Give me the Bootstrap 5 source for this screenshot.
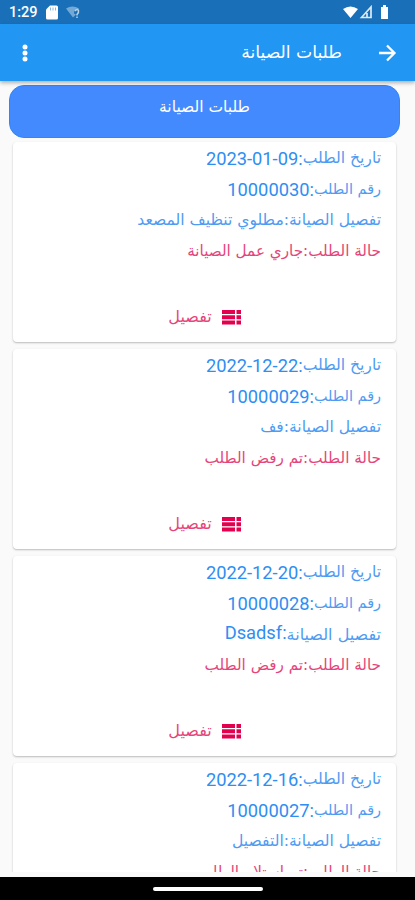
<!DOCTYPE html>
<html lang="ar" dir="rtl">
<head>
<meta charset="utf-8">
<meta name="viewport" content="width=device-width, initial-scale=1">
<title>طلبات الصيانة</title>
<link href="https://cdn.jsdelivr.net/npm/bootstrap@5.3.0/dist/css/bootstrap.min.css" rel="stylesheet">
<style>
body{height:900px;background:#fafafa;font-family:Roboto,"DejaVu Sans",sans-serif}
.status{height:24px;background:#1a70b8;font-size:14.500px;font-weight:500;line-height:26px;padding:0 9px}
.status-gap{width:9px}
.signals{margin-top:5px}
.appbar{height:57px;background:#2196f3;box-shadow:0 2px 4px rgba(0,0,0,.3);z-index:1;padding:0 16px 0 13px}
.ar{font-family:"DejaVu Sans",sans-serif}
.appbar .ar{font-size:17.2px;margin-right:33px}
.banner{height:53px;margin:4px 15px 0 9px;border-radius:15px;background:#448aff;border:1px solid #2f86f6;font-size:15.5px;line-height:43px}
.orders{padding-top:4px;margin-bottom:5px}
.order{height:200px;margin:0 19px 7px 13px;border:0;border-radius:4px;box-shadow:0 1px 2px rgba(0,0,0,.26);padding:0 15px 0 16px;color:#2e8ef2}
.line{height:31px;line-height:33px;font-size:18.3px;white-space:nowrap}
.line .ar,.action .ar{font-size:15.6px}
.line .ar{color:#4f9bf2;display:inline-block;line-height:28px;vertical-align:2.500px}
.line .label-date{font-size:15.6px}
.line .label-num{font-size:14.4px}
.latin{line-height:29px}
.latin .ar{font-size:16px;vertical-align:-1px}
.rose .ar{color:#e5457a;font-size:15.2px}
.action{height:30px;margin-top:36px;color:#e5457a;padding-right:1px;gap:10px}
.action .ar{font-size:16px}
.sysbar{height:23px;background:#000}
.pill{width:110px;height:4px}
svg{display:block}
</style>
</head>
<body class="d-flex flex-column overflow-hidden m-0">
<header class="status d-flex text-white flex-shrink-0 gap-2" dir="ltr">
<span>1:29</span>
<svg class="mt-1" width="12" height="16" viewBox="0 -1.500 12 16"><path fill="#fff" d="M4 0h6.500Q12 0 12 1.500v11Q12 14 10.500 14h-9Q0 14 0 12.500V4z"/><path stroke="#8fb8dc" d="M4.500 2v3M7 2v3M9.500 2v3"/></svg>
<svg class="mt-1" width="16" height="16" viewBox="0 -1.500 16 16"><path fill="#73a9d4" d="M0 3Q6.500-1 13 3L11 5Q8 4 8 8l2 1-3 3z"/><path fill="none" stroke="#b9d3e9" stroke-width="1.500" d="M9 5.500Q11 3 12.500 5q.5 2-1.500 4v1M11 11v1.500"/></svg>
<svg class="signals ms-auto" width="46" height="16" viewBox="0 0 46 16"><path fill="#fff" d="M0 4Q7.500-1 15 4L7.500 13zM38 2h2V0h3v2h2v12h-7z"/><path fill="none" stroke="#dceaf5" stroke-width="1.700" d="M18.500 12.500 28 2v10.500zM24 8v4"/></svg>
<span class="status-gap"></span>
</header>
<nav class="appbar d-flex align-items-center text-white flex-shrink-0 position-relative">
<svg width="24" height="24" viewBox="0 0 24 24"><path fill="none" stroke="#fff" stroke-width="2.300" d="M4 12h15M12 4.500l7.500 7.500-7.500 7.500"/></svg>
<span class="ar">طلبات الصيانة</span>
<svg class="me-auto" width="24" height="24" viewBox="0 0 24 24" fill="#fff"><circle cx="12" cy="6" r="2.500"/><circle cx="12" cy="12" r="2.500"/><circle cx="12" cy="18" r="2.500"/></svg>
</nav>
<div class="banner ar text-center text-white flex-shrink-0">طلبات الصيانة</div>
<svg class="d-none"><symbol id="rows" viewBox="0 0 19 15"><path fill="#e2004f" d="M0 0h13v4H0zM0 5.300h13v4H0zM0 10.600h13v4H0zM14.500 0H19v4h-4.500zM14.500 5.300H19v4h-4.500zM14.500 10.600H19v4h-4.500z"/></symbol></svg>
<main class="orders flex-grow-1 overflow-hidden">
<article class="card order">
<div class="line"><span class="ar label-date">تاريخ الطلب</span>:<bdi>2023-01-09</bdi></div>
<div class="line"><span class="ar label-num">رقم الطلب</span>:<bdi>10000030</bdi></div>
<div class="line"><span class="ar">تفصيل الصيانة:مطلوي تنظيف المصعد</span></div>
<div class="line rose"><span class="ar">حالة الطلب:جاري عمل الصيانة</span></div>
<div class="action d-flex align-items-center justify-content-center"><svg width="19" height="15"><use href="#rows"/></svg><span class="ar">تفصيل</span></div>
</article>
<article class="card order">
<div class="line"><span class="ar label-date">تاريخ الطلب</span>:<bdi>2022-12-22</bdi></div>
<div class="line"><span class="ar label-num">رقم الطلب</span>:<bdi>10000029</bdi></div>
<div class="line"><span class="ar">تفصيل الصيانة:فف</span></div>
<div class="line rose"><span class="ar">حالة الطلب:تم رفض الطلب</span></div>
<div class="action d-flex align-items-center justify-content-center"><svg width="19" height="15"><use href="#rows"/></svg><span class="ar">تفصيل</span></div>
</article>
<article class="card order">
<div class="line"><span class="ar label-date">تاريخ الطلب</span>:<bdi>2022-12-20</bdi></div>
<div class="line"><span class="ar label-num">رقم الطلب</span>:<bdi>10000028</bdi></div>
<div class="line latin"><span class="ar">تفصيل الصيانة</span>:<bdi>Dsadsf</bdi></div>
<div class="line rose"><span class="ar">حالة الطلب:تم رفض الطلب</span></div>
<div class="action d-flex align-items-center justify-content-center"><svg width="19" height="15"><use href="#rows"/></svg><span class="ar">تفصيل</span></div>
</article>
<article class="card order">
<div class="line"><span class="ar label-date">تاريخ الطلب</span>:<bdi>2022-12-16</bdi></div>
<div class="line"><span class="ar label-num">رقم الطلب</span>:<bdi>10000027</bdi></div>
<div class="line"><span class="ar">تفصيل الصيانة:التفصيل</span></div>
<div class="line rose"><span class="ar">حالة الطلب:تم استلام الطلب</span></div>
</article>
</main>
<footer class="sysbar d-flex align-items-center justify-content-center flex-shrink-0"><div class="pill bg-white rounded-pill"></div></footer>
<script src="https://cdn.jsdelivr.net/npm/bootstrap@5.3.0/dist/js/bootstrap.bundle.min.js"></script>
</body>
</html>
